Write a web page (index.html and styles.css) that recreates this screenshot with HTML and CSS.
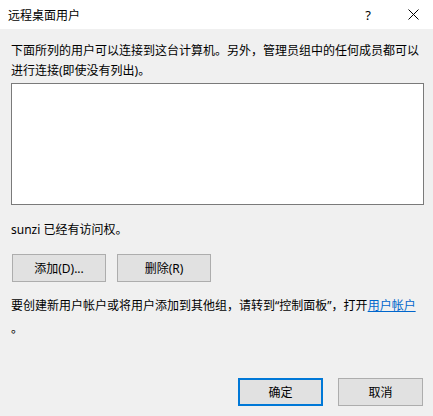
FILE: index.html
```html
<!DOCTYPE html>
<html lang="zh-CN">
<head>
  <meta charset="UTF-8" />
  <title>远程桌面用户</title>
  <link rel="stylesheet" href="styles.css">
</head>
<body>
  <div class="dialog">
    <div class="titlebar">
      <span class="title">远程桌面用户</span>
      <span class="help">?</span>
      <svg class="close" width="11" height="11" viewBox="0 0 11 11">
        <path d="M0.5 0.5 L10.5 10.5 M10.5 0.5 L0.5 10.5" stroke="#000" stroke-width="1" fill="none"/>
      </svg>
    </div>

    <div class="content">
      <p class="intro">下面所列的用户可以连接到这台计算机。另外，管理员组中的任何成员都可以进行连接(即使没有列出)。</p>

      <div class="userlist"></div>

      <p class="status">sunzi 已经有访问权。</p>

      <div class="row">
        <button class="btn">添加(D)...</button>
        <button class="btn">删除(R)</button>
      </div>

      <p class="hint">要创建新用户帐户或将用户添加到其他组，请转到“控制面板”，打开<a href="#">用户帐户</a><br>。</p>

      <div class="footer">
        <button class="btn primary">确定</button>
        <button class="btn">取消</button>
      </div>
    </div>
  </div>
</body>
</html>
```

FILE: styles.css
```css
body {
  margin: 0;
  font-family: "Noto Sans", "Noto Sans CJK SC", sans-serif;
  font-size: 12px;
  color: #000;
  background: #f0f0f0;
}

.dialog {
  width: 433px;
  height: 416px;
  display: flex;
  flex-direction: column;
  overflow: hidden;
}

.titlebar {
  height: 29px;
  background: #ffffff;
  display: flex;
  align-items: center;
  padding: 0 14px 0 8px;
  flex-shrink: 0;
}

.title {
  flex: 1;
  font-size: 12px;
}

.help {
  font-size: 13px;
  margin-right: 37px;
}

.content {
  flex: 1;
  background: #f0f0f0;
  padding: 0 9px 0 11px;
  display: flex;
  flex-direction: column;
}

p {
  margin: 0;
}

.intro {
  margin-top: 12px;
  line-height: 20px;
}

.userlist {
  height: 120px;
  margin-top: 2px;
  background: #ffffff;
  border: 1px solid #7a7a7a;
}

.status {
  margin-top: 15px;
  line-height: 20px;
}

.row {
  display: flex;
  gap: 11px;
  margin-top: 14px;
  padding-left: 1px;
}

.btn {
  width: 94px;
  height: 28px;
  font-family: inherit;
  font-size: 12px;
  color: #000;
  background: #e1e1e1;
  border: 1px solid #adadad;
  padding: 0;
}

.hint {
  margin-top: 12px;
  line-height: 23px;
  width: 410px;
}

.hint a {
  color: #0066cc;
}

.footer {
  margin-top: auto;
  margin-bottom: 10px;
  display: flex;
  justify-content: flex-end;
  gap: 15px;
  padding-right: 1px;
}

.footer .btn {
  width: 85px;
}

.btn.primary {
  border: 2px solid #0078d7;
}
```
